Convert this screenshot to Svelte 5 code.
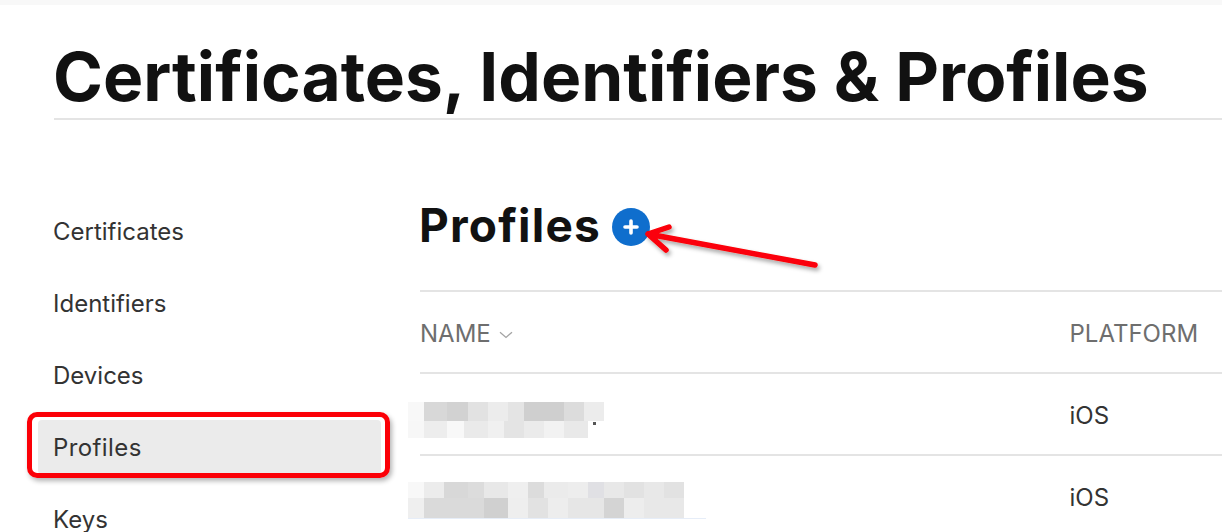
<script>
  const navItems = ['Certificates', 'Identifiers', 'Devices', 'Profiles', 'Keys'];

  // blurred out profile names: [width, colour] per mosaic cell
  const blurRows = [
    {
      shift: 10,
      bands: [
        {
          height: 19,
          cells: [[16, '#f8f8f8'], [23, '#d8d8d8'], [21, '#d2d2d2'], [20, '#e2e2e2'], [20, '#ececec'], [16, '#e4e4e4'], [40, '#cfcfcf'], [20, '#dcdcdc'], [20, '#ececec']]
        },
        {
          height: 17,
          cells: [[16, '#f7f7f7'], [23, '#ededed'], [17, '#f8f8f8'], [24, '#eaeaea'], [16, '#f0f0f0'], [20, '#e4e4e4'], [20, '#ebebeb'], [20, '#f2f2f2'], [24, '#e9e9e9']]
        }
      ]
    },
    {
      shift: 6,
      bands: [
        {
          height: 16,
          cells: [[16, '#f8f8f8'], [20, '#ececec'], [24, '#d8d8d8'], [16, '#dcdcdc'], [24, '#e8e8e8'], [20, '#efefef'], [16, '#dcdcdc'], [24, '#ebebeb'], [20, '#ededed'], [16, '#e0e0e4'], [20, '#e8e8e8'], [20, '#e2e2e2'], [20, '#e8e8e8'], [20, '#e2e2e2']]
        },
        {
          height: 20,
          cells: [[16, '#efefef'], [60, '#dadada'], [24, '#d0d0d0'], [20, '#eeeeee'], [20, '#e2e2e2'], [20, '#ededed'], [36, '#e6e6e6'], [20, '#d4d4d4'], [20, '#ededed'], [40, '#e8e8e8']]
        }
      ]
    }
  ];
</script>

<div class="page">
  <div class="topstrip"></div>
  <header class="head">
    <h1>Certificates, Identifiers &amp; Profiles</h1>
  </header>

  <div class="body">
    <nav class="side">
      {#each navItems as item}
        <a class="nav-item" class:active={item === 'Profiles'} href="#top">{item}</a>
      {/each}
    </nav>

    <main class="content">
      <div class="title-row">
        <h2>Profiles</h2>
        <button class="add" aria-label="Add profile">
          <svg width="20" height="20" viewBox="0 0 20 20">
            <path d="M10 4v12M4 10h12" stroke="#fff" stroke-width="3.6" stroke-linecap="round" />
          </svg>
        </button>
      </div>

      <div class="row table-head">
        <div class="col-name">
          NAME
          <svg class="sort" width="14" height="8" viewBox="0 0 14 8">
            <path d="M1 1.2l6 5.2 6-5.2" fill="none" stroke="#a4a4a4" stroke-width="1.3" />
          </svg>
        </div>
        <div class="col-platform">PLATFORM</div>
      </div>

      {#each blurRows as blur}
        <div class="row">
          <div class="col-name">
            <div class="blur" style="margin-top:{blur.shift}px">
              {#each blur.bands as band}
                <div class="band" style="height:{band.height}px">
                  {#each band.cells as cell}
                    <span style="width:{cell[0]}px;background:{cell[1]}"></span>
                  {/each}
                </div>
              {/each}
            </div>
          </div>
          <div class="col-platform value">iOS</div>
        </div>
      {/each}
    </main>
  </div>

  <!-- annotations drawn over the screenshot -->
  <div class="mark-box"></div>
  <i class="speck"></i>
  <i class="blue-line"></i>
  <svg class="mark-arrow" width="1222" height="532" viewBox="0 0 1222 532">
    <defs>
      <filter id="arrowShadow" x="-20%" y="-40%" width="140%" height="180%">
        <feDropShadow dx="2" dy="3" stdDeviation="2" flood-color="#000" flood-opacity="0.35" />
      </filter>
    </defs>
    <path
      d="M815 265L648 234M648 234L669 227M648 234L666 250"
      fill="none"
      stroke="#fb0007"
      stroke-width="5.5"
      stroke-linecap="round"
      filter="url(#arrowShadow)"
    />
  </svg>
</div>

<style>
  :global(body) {
    background: #fff;
    overflow: hidden;
  }
  .page {
    position: relative;
    width: 1222px;
    height: 532px;
    overflow: hidden;
    font-family: Inter, "Liberation Sans", sans-serif;
    color: #111;
  }
  .topstrip {
    height: 5px;
    background: #f8f8f8;
  }
  .head {
    margin-left: 54px;
    height: 115px;
    border-bottom: 2px solid #e4e4e4;
    box-sizing: border-box;
  }
  h1 {
    margin: 0 0 0 -1px;
    padding-top: 31px;
    font-size: 67.6px;
    line-height: 82px;
    font-weight: 700;
    white-space: nowrap;
  }
  .body {
    display: flex;
  }
  .side {
    width: 420px;
    flex: none;
    padding: 84px 0 0 38px;
    box-sizing: border-box;
    display: flex;
    flex-direction: column;
    gap: 18px;
  }
  .nav-item {
    display: block;
    width: 343px;
    flex: none;
    box-sizing: border-box;
    height: 54px;
    line-height: 56px;
    padding-left: 15px;
    font-size: 24px;
    color: #333;
    text-decoration: none;
    border-radius: 4px;
  }
  .nav-item.active {
    background: #ebebeb;
    letter-spacing: 0.4px;
  }
  .content {
    flex: 1;
    min-width: 0;
  }
  .title-row {
    display: flex;
    align-items: flex-start;
    gap: 11px;
    height: 172px;
    box-sizing: border-box;
    padding-top: 77px;
    border-bottom: 2px solid #e4e4e4;
  }
  h2 {
    margin: 0 0 0 -1px;
    font-size: 46px;
    line-height: 56px;
    font-weight: 700;
    letter-spacing: 1.2px;
  }
  .add {
    width: 38px;
    height: 38px;
    margin-top: 11px;
    padding: 0;
    border: none;
    border-radius: 50%;
    background: #0f6ecd;
    display: flex;
    align-items: center;
    justify-content: center;
  }
  .row {
    display: flex;
    height: 82px;
    box-sizing: border-box;
    padding-top: 2px;
    border-bottom: 2px solid #e4e4e4;
    align-items: center;
    font-size: 24px;
  }
  .table-head {
    color: #6e6e6e;
  }
  .col-name {
    width: 649.5px;
    flex: none;
    display: flex;
    align-items: center;
    gap: 8px;
  }
  .col-platform {
    white-space: nowrap;
  }
  .value {
    color: #333;
  }
  .sort {
    margin-top: 4px;
  }
  .blur {
    margin-left: -12px;
    filter: blur(0.7px);
  }
  .band {
    display: flex;
  }
  .band span {
    display: block;
  }
  .mark-box {
    position: absolute;
    left: 27px;
    top: 412px;
    width: 363px;
    height: 66px;
    box-sizing: border-box;
    border: 5px solid #fb0007;
    border-radius: 10px;
    box-shadow: 2px 3px 5px rgba(0, 0, 0, 0.3);
  }
  .mark-arrow {
    position: absolute;
    left: 0;
    top: 0;
  }
  .speck {
    position: absolute;
    left: 593px;
    top: 422px;
    width: 3px;
    height: 3px;
    background: #555;
  }
  .blue-line {
    position: absolute;
    left: 408px;
    top: 518px;
    width: 298px;
    height: 1px;
    background: #e6edf8;
  }
</style>
